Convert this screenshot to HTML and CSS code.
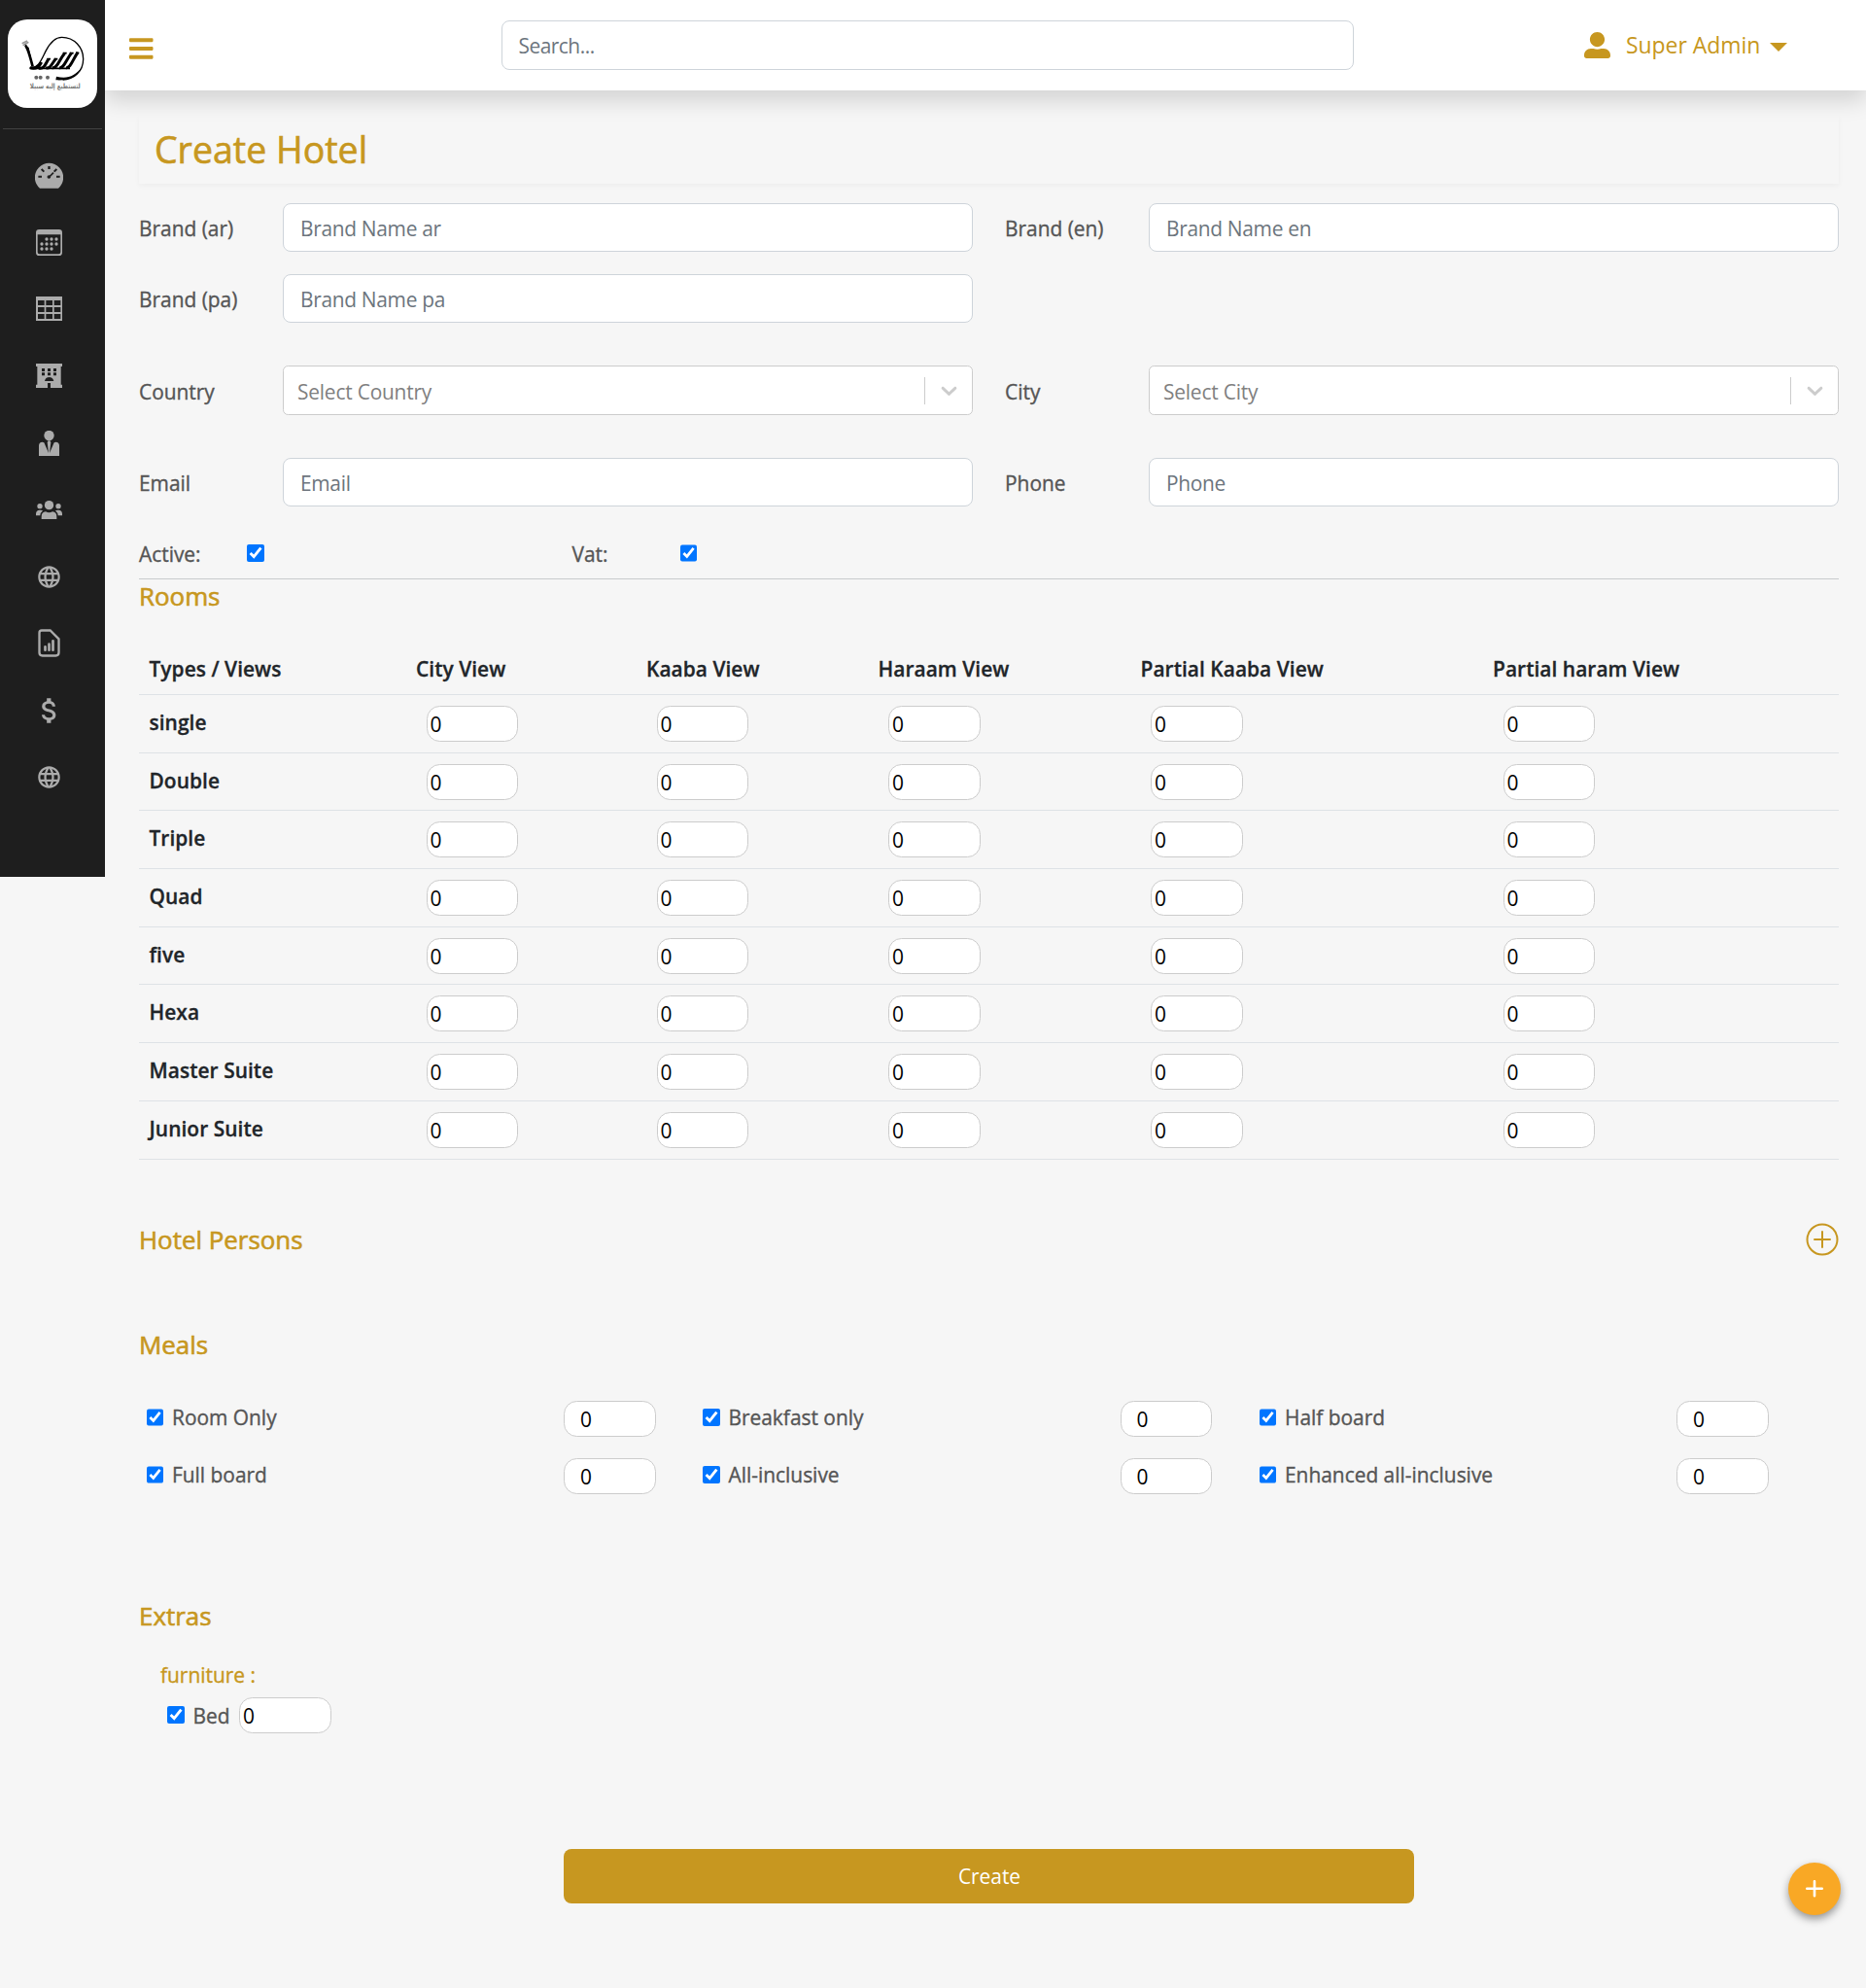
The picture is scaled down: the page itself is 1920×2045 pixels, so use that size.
FILE: index.html
```html
<!DOCTYPE html>
<html lang="en">
<head>
<meta charset="utf-8">
<title>Create Hotel</title>
<link rel="stylesheet" href="styles.css">
</head>
<body>
<svg width="0" height="0" class="defs">
  <symbol id="globe" viewBox="0 0 24 24"><path d="M11.99 2C6.47 2 2 6.48 2 12s4.47 10 9.99 10C17.52 22 22 17.52 22 12S17.52 2 11.99 2zm6.93 6h-2.95c-.32-1.25-.78-2.45-1.38-3.56 1.84.63 3.37 1.91 4.33 3.56zM12 4.04c.83 1.2 1.48 2.53 1.91 3.96h-3.82c.43-1.43 1.08-2.76 1.91-3.96zM4.26 14C4.1 13.36 4 12.69 4 12s.1-1.36.26-2h3.38c-.08.66-.14 1.32-.14 2s.06 1.34.14 2H4.26zm.82 2h2.95c.32 1.25.78 2.45 1.38 3.56-1.84-.63-3.37-1.9-4.33-3.56zm2.95-8H5.08c.96-1.66 2.49-2.93 4.33-3.56C8.81 5.55 8.35 6.75 8.03 8zM12 19.96c-.83-1.2-1.48-2.53-1.91-3.96h3.82c-.43 1.43-1.08 2.76-1.91 3.96zM14.34 14H9.66c-.09-.66-.16-1.32-.16-2s.07-1.35.16-2h4.68c.09.65.16 1.32.16 2s-.07 1.34-.16 2zm.25 5.56c.6-1.11 1.06-2.31 1.38-3.56h2.95c-.96 1.65-2.49 2.93-4.33 3.56zM16.36 14c.08-.66.14-1.32.14-2s-.06-1.34-.14-2h3.38c.16.64.26 1.31.26 2s-.1 1.36-.26 2h-3.38z"/></symbol>
  <symbol id="chevron" viewBox="0 0 20 20"><path d="M4.516 7.548c0.436-0.446 1.043-0.481 1.576 0l3.908 3.747 3.908-3.747c0.533-0.481 1.141-0.446 1.574 0 0.436 0.445 0.408 1.197 0 1.615-0.406 0.418-4.695 4.502-4.695 4.502-0.217 0.223-0.502 0.335-0.787 0.335s-0.57-0.112-0.789-0.335c0 0-4.287-4.084-4.695-4.502s-0.436-1.17 0-1.615z"/></symbol>
</svg>
<div class="app">
  <aside class="sidebar">
    <div class="brand">
      <svg class="logo" viewBox="24 60 276 273" fill="none" stroke="#000">
        <g stroke="#999" stroke-width="5"><path d="M68 134L84 126M71 140L88 130"/></g>
        <path d="M78 140C86 147 92 170 101 206" stroke-width="8"/>
        <path d="M76 136L89 147L96 178Z" fill="#000" stroke="none"/>
        <path d="M92 208C118 214 128 184 141 158C155 130 171 115 191 115C229 115 257 146 257 182C257 220 228 246 194 246" stroke-width="4"/>
        <path d="M252 208C240 235 214 250 172 247L174 236C207 245 232 235 252 208Z" fill="#000" stroke="none"/>
        <path d="M92 209C110 215 122 204 128 192M120 210C134 214 140 200 150 181M141 209C154 214 160 198 172 181M161 209C176 214 182 184 200 164M183 209C197 212 203 186 221 163M204 209C218 211 224 184 240 162" stroke-width="9"/>
        <path d="M94 211H216M146 182H156M168 182H178M194 164H206M215 164H227M234 163H244" stroke-width="5"/>
        <g fill="#666" stroke="none"><circle cx="112" cy="239" r="6"/><circle cx="125" cy="239" r="6"/><circle cx="147" cy="239" r="6"/></g>
        <text class="logo-text" x="170" y="273" text-anchor="middle" textLength="156" lengthAdjust="spacingAndGlyphs">لتستطيع إليه سبيلا</text>
      </svg>
    </div>
    <nav class="menu">
      <a><svg width="29" height="27" viewBox="108 82 87 81"><path fill-rule="evenodd" d="M123 162A44 44 0 1 1 180 162ZM148 94V103H155V94ZM118 123V129H129V123ZM174 123V129H185V123Z"/><path d="M128 103L136 111M175 103L167 111" stroke="#1e1e1e" stroke-width="6"/><path d="M152 127L165 114" stroke="#1e1e1e" stroke-width="5"/><circle cx="151" cy="127" r="5.5" fill="#1e1e1e"/></svg></a>
      <a><svg width="27" height="27" viewBox="111 288 81 81"><path fill-rule="evenodd" d="M121 288H182Q192 288 192 298V359Q192 369 182 369H121Q111 369 111 359V298Q111 288 121 288ZM116 304V358Q116 364 122 364H181Q187 364 187 358V304Z"/><g><circle cx="144" cy="318" r="5"/><circle cx="159" cy="318" r="5"/><circle cx="174" cy="318" r="5"/><circle cx="129" cy="333" r="5"/><circle cx="144" cy="333" r="5"/><circle cx="159" cy="333" r="5"/><circle cx="174" cy="333" r="5"/><circle cx="129" cy="348" r="5"/><circle cx="144" cy="348" r="5"/><circle cx="159" cy="348" r="5"/></g></svg></a>
      <a><svg width="27" height="25" viewBox="111 498 81 75"><path fill-rule="evenodd" d="M111 498H192V573H111ZM117 510V525H137V510ZM142 510V525H162V510ZM167 510V525H187V510ZM117 531V546H137V531ZM142 531V546H162V531ZM167 531V546H187V531ZM117 552V567H137V552ZM142 552V567H162V552ZM167 552V567H187V552Z"/></svg></a>
      <a><svg width="27" height="25" viewBox="111 702 81 75"><path fill-rule="evenodd" d="M111 702H192V711H188V767H192V777H156V762H147V777H111V767H115V711H111ZM129 717V726H138V717ZM147 717V726H156V717ZM165 717V726H174V717ZM129 730V739H138V730ZM147 730V739H156V730ZM165 730V739H174V730ZM138 756H166Q163 744 152 744Q140 744 138 756Z"/></svg></a>
      <a><svg width="21" height="26" viewBox="120 906 63 78"><circle cx="151.500" cy="921" r="15.500"/><path d="M120 984V952Q120 942 131 941L136 943L150 975L146 942L149 937H154L157 942L153 975L167 943L172 941Q183 942 183 952V984Z"/></svg></a>
      <a><svg width="27" height="19.500" viewBox="111 44 81 58.500"><circle cx="151.500" cy="58" r="14"/><circle cx="123" cy="61" r="8"/><circle cx="180" cy="61" r="8"/><path d="M128 102V94Q128 79 141 78Q151.500 84 162 78Q175 79 175 94V102ZM111 90V84Q112 73 122 73H126Q130 73 132 75Q124 82 124 90ZM192 90V84Q191 73 181 73H177Q173 73 171 75Q179 82 179 90Z"/></svg></a>
      <a><svg width="27" height="27"><use href="#globe"/></svg></a>
      <a><svg width="23" height="29" viewBox="117 443 69 87"><path d="M129 447.500H155L181.500 474V516Q181.500 525.500 172 525.500H131Q121.500 525.500 121.500 516V455Q121.500 447.500 129 447.500Z" fill="none" stroke="#ababab" stroke-width="7"/><path d="M139.500 498V508M151.500 490V508M163.500 480V508" stroke="#ababab" stroke-width="8" stroke-linecap="round"/></svg></a>
      <a><svg width="34" height="34" viewBox="0 0 24 24"><path d="M11.8 10.900c-2.270-.590-3-1.200-3-2.150 0-1.090 1.010-1.850 2.700-1.850 1.780 0 2.440.850 2.500 2.100h2.210c-.070-1.720-1.120-3.300-3.210-3.810V3h-3v2.160c-1.940.420-3.500 1.680-3.500 3.610 0 2.310 1.910 3.460 4.700 4.130 2.500.600 3 1.480 3 2.410 0 .690-.490 1.790-2.700 1.790-2.060 0-2.870-.920-2.980-2.100h-2.200c.120 2.190 1.760 3.420 3.680 3.830V21h3v-2.150c1.950-.370 3.500-1.500 3.500-3.550 0-2.840-2.430-3.810-4.700-4.400z"/></svg></a>
      <a><svg width="27" height="27"><use href="#globe"/></svg></a>
    </nav>
  </aside>
  <div class="page">
    <header class="topbar">
      <svg class="burger" viewBox="0 0 448 512"><path d="M16 132h416c8.837 0 16-7.163 16-16V76c0-8.837-7.163-16-16-16H16C7.163 60 0 67.163 0 76v40c0 8.837 7.163 16 16 16zm0 160h416c8.837 0 16-7.163 16-16v-40c0-8.837-7.163-16-16-16H16c-8.837 0-16 7.163-16 16v40c0 8.837 7.163 16 16 16zm0 160h416c8.837 0 16-7.163 16-16v-40c0-8.837-7.163-16-16-16H16c-8.837 0-16 7.163-16 16v40c0 8.837 7.163 16 16 16z"/></svg>
      <input class="control search" placeholder="Search...">
      <div class="profile">
        <svg width="27" height="27" viewBox="0 0 512 512"><path d="M256 288c79.500 0 144-64.500 144-144S335.500 0 256 0 112 64.500 112 144s64.500 144 144 144zm128 32h-55.100c-22.200 10.200-46.900 16-72.900 16s-50.600-5.800-72.900-16H128C57.300 320 0 377.300 0 448v16c0 26.500 21.500 48 48 48h416c26.500 0 48-21.500 48-48v-16c0-70.700-57.300-128-128-128z"/></svg>
        <span class="user">Super Admin</span>
        <i class="caret"></i>
      </div>
    </header>
    <main class="content">
      <h3 class="title">Create Hotel</h3>
      <div class="fields brands">
        <label>Brand (ar)</label><input class="control" placeholder="Brand Name ar">
        <label class="second">Brand (en)</label><input class="control" placeholder="Brand Name en">
        <label>Brand (pa)</label><input class="control" placeholder="Brand Name pa">
      </div>
      <div class="fields place">
        <label>Country</label><div class="select"><span>Select Country</span><i></i><svg width="27" height="27"><use href="#chevron"/></svg></div>
        <label class="second">City</label><div class="select"><span>Select City</span><i></i><svg width="27" height="27"><use href="#chevron"/></svg></div>
      </div>
      <div class="fields contact">
        <label>Email</label><input class="control" placeholder="Email">
        <label class="second">Phone</label><input class="control" placeholder="Phone">
      </div>
      <div class="flags">
        <label>Active:</label><input type="checkbox" checked>
        <label>Vat:</label><input type="checkbox" checked>
      </div>
      <h5 class="heading rooms-heading">Rooms</h5>
      <table class="rooms">
        <colgroup><col class="c1"><col class="c2"><col class="c3"><col class="c4"><col class="c5"><col></colgroup>
        <thead><tr><th>Types / Views</th><th>City View</th><th>Kaaba View</th><th>Haraam View</th><th>Partial Kaaba View</th><th>Partial haram View</th></tr></thead>
        <tbody>
          <tr><th>single</th><td><input class="num" value="0"></td><td><input class="num" value="0"></td><td><input class="num" value="0"></td><td><input class="num" value="0"></td><td><input class="num" value="0"></td></tr>
          <tr><th>Double</th><td><input class="num" value="0"></td><td><input class="num" value="0"></td><td><input class="num" value="0"></td><td><input class="num" value="0"></td><td><input class="num" value="0"></td></tr>
          <tr><th>Triple</th><td><input class="num" value="0"></td><td><input class="num" value="0"></td><td><input class="num" value="0"></td><td><input class="num" value="0"></td><td><input class="num" value="0"></td></tr>
          <tr><th>Quad</th><td><input class="num" value="0"></td><td><input class="num" value="0"></td><td><input class="num" value="0"></td><td><input class="num" value="0"></td><td><input class="num" value="0"></td></tr>
          <tr><th>five</th><td><input class="num" value="0"></td><td><input class="num" value="0"></td><td><input class="num" value="0"></td><td><input class="num" value="0"></td><td><input class="num" value="0"></td></tr>
          <tr><th>Hexa</th><td><input class="num" value="0"></td><td><input class="num" value="0"></td><td><input class="num" value="0"></td><td><input class="num" value="0"></td><td><input class="num" value="0"></td></tr>
          <tr><th>Master Suite</th><td><input class="num" value="0"></td><td><input class="num" value="0"></td><td><input class="num" value="0"></td><td><input class="num" value="0"></td><td><input class="num" value="0"></td></tr>
          <tr><th>Junior Suite</th><td><input class="num" value="0"></td><td><input class="num" value="0"></td><td><input class="num" value="0"></td><td><input class="num" value="0"></td><td><input class="num" value="0"></td></tr>
        </tbody>
      </table>
      <div class="persons">
        <h5 class="heading">Hotel Persons</h5>
        <svg width="34" height="34" viewBox="0 0 34 34" fill="none" stroke="#c79720" stroke-width="2"><circle cx="17" cy="17" r="15.500"/><path d="M17 9V25M9 17H25" stroke-linecap="round"/></svg>
      </div>
      <h5 class="heading meals-heading">Meals</h5>
      <div class="meals">
        <div class="meal"><input type="checkbox" checked><label>Room Only</label><input class="num" value="0"></div>
        <div class="meal"><input type="checkbox" checked><label>Breakfast only</label><input class="num" value="0"></div>
        <div class="meal"><input type="checkbox" checked><label>Half board</label><input class="num" value="0"></div>
        <div class="meal"><input type="checkbox" checked><label>Full board</label><input class="num" value="0"></div>
        <div class="meal"><input type="checkbox" checked><label>All-inclusive</label><input class="num" value="0"></div>
        <div class="meal"><input type="checkbox" checked><label>Enhanced all-inclusive</label><input class="num" value="0"></div>
      </div>
      <h5 class="heading extras-heading">Extras</h5>
      <div class="extras">
        <div class="kind">furniture :</div>
        <div class="extra"><input type="checkbox" checked><label>Bed</label><input class="num" value="0"></div>
      </div>
      <button class="create">Create</button>
    </main>
  </div>
</div>
<button class="fab"><svg width="18" height="18" viewBox="0 0 18 18"><path d="M9 1.200V16.200M1.200 8.700H16.800" stroke="#fff" stroke-width="2.600" stroke-linecap="round"/></svg></button>
</body>
</html>
```
FILE: styles.css
```css
* { box-sizing: border-box; }

body {
  margin: 0;
  background: #f6f6f6;
  color: #555;
  font: 20.9px/32px "Open Sans", "Noto Sans", sans-serif;
}

input, button { font: inherit; letter-spacing: inherit; margin: 0; }

/* Medium weight: the regular face with a slight outline */
label, .kind { -webkit-text-stroke: .35px currentColor; }
.title, .heading { -webkit-text-stroke: .6px currentColor; }

.defs { display: block; position: absolute; }
.app { display: flex; align-items: flex-start; min-height: 2045px; }

/* Sidebar */
.sidebar {
  position: relative;
  z-index: 2;
  flex: none;
  width: 108px;
  height: 902px;
  background: #1e1e1e;
}
.brand { height: 133px; margin: 0 3px; padding: 20px 5px 0; border-bottom: 1px solid #424242; }
.logo { display: block; width: 92px; height: 91px; border-radius: 20px; background: #fff; }
.logo-text { font: bold 22px "DejaVu Sans", sans-serif; fill: #777; stroke: none; direction: rtl; }
.menu { padding-top: 13px; width: 101px; fill: #ababab; }
.menu a { display: flex; align-items: center; justify-content: center; height: 68.8px; }

/* Top bar */
.page { flex: 1; }
.topbar {
  display: flex;
  align-items: center;
  height: 93px;
  padding: 0 81px 0 25px;
  background: #fff;
  box-shadow: 0 10.8px 21.6px rgba(0, 0, 0, .15);
}
.burger { width: 24.5px; height: 28px; margin-top: 7px; fill: #c79720; }
.control {
  width: 100%;
  height: 50px;
  padding: 1px 17px 0;
  border: 1px solid #ced4da;
  border-radius: 8px;
  background: #fff;
  color: #212529;
  outline: 0;
}
.control::placeholder { color: #6c757d; opacity: 1; letter-spacing: -.3px; }
.search { width: 877px; height: 51px; margin-left: 358px; }
.search::placeholder { letter-spacing: -.5px; }
.profile { display: flex; align-items: center; margin-left: auto; color: #c79720; fill: #c79720; }
.user { width: 139px; margin: 0 9px 0 16px; font-size: 22.9px; white-space: nowrap; }
.caret { border: 9px solid transparent; border-top-color: #c79720; border-bottom: 0; margin-top: 4px; }

/* Form */
.content { padding: 25px 28px 0 35px; }
.title {
  margin: 0;
  height: 71px;
  padding-left: 16px;
  color: #c79720;
  font-size: 37.5px;
  line-height: 71px;
  font-weight: 400;
  box-shadow: 0 2.7px 5.4px rgba(0, 0, 0, .04);
}
.fields {
  display: grid;
  grid-template-columns: 148px 710px 181px 710px;
  align-items: center;
}
.fields label { padding-top: 2px; }
.fields .second { padding-left: 33px; }
.brands { margin-top: 20px; row-gap: 23px; }
.place { margin-top: 44px; }
.contact { margin-top: 44px; }
.select {
  display: flex;
  align-items: center;
  height: 51px;
  padding: 0 10px 0 14px;
  border: 1px solid #ccc;
  border-radius: 5.4px;
  background: #fff;
  color: #808080;
  fill: #ccc;
}
.select span { flex: 1; padding-top: 2px; letter-spacing: -.2px; }
.select i { width: 1px; height: 28px; margin-right: 11px; background: #ccc; }
input[type="checkbox"] { flex: none; width: 17.5px; height: 17.5px; accent-color: #0075ff; }
.flags {
  display: grid;
  grid-template-columns: 111px 334.5px 111px 1fr;
  align-items: center;
  height: 75px;
  padding-top: 22px;
  border-bottom: 1px solid #c8cbcd;
}
.flags label { padding-top: 2px; }
.heading {
  margin: 0;
  color: #c79720;
  font-size: 25.9px;
  line-height: 32px;
  font-weight: 400;
}
.rooms-heading { padding-top: 1px; }

/* Rooms */
.rooms {
  width: 1749px;
  margin-top: 32px;
  border-spacing: 0;
  table-layout: fixed;
  color: #212529;
}
.c1 { width: 274.5px; }
.c2 { width: 237px; }
.c3 { width: 238.5px; }
.c4 { width: 270px; }
.c5 { width: 362.5px; }
.rooms th, .rooms td { padding: 11px 10.5px; text-align: left; vertical-align: top; border-bottom: 1px solid #dee2e6; }
.rooms th { font-weight: 600; letter-spacing: .05px; -webkit-text-stroke: .3px currentColor; }
.rooms thead th { height: 54px; padding-top: 11px; padding-bottom: 0; }
.rooms tbody th, .rooms tbody td { height: 59.7px; padding-bottom: 0; }
.rooms tbody th { padding-top: 12px; }
.rooms td .num { margin-left: 10.5px; }
.num {
  display: block;
  width: 94.5px;
  height: 37px;
  padding: 1px 3px 0;
  border: 1px solid #ccc;
  border-radius: 13.5px;
  background: #fff;
  color: #000;
}

/* Lower sections */
.persons { display: flex; justify-content: space-between; align-items: center; width: 1749px; height: 34px; margin-top: 65px; }
.meals-heading { margin-top: 75px; }
.meals { display: grid; grid-template-columns: 572.5px 572.5px 572.5px; row-gap: 22px; margin-top: 42px; }
.meal { display: grid; grid-template-columns: 26.5px 403px 94.5px; align-items: center; padding-left: 7.5px; }
.meal label, .meal input[type="checkbox"] { position: relative; top: -1px; }
.meal .num { padding-left: 16px; }
.extras-heading { margin-top: 109px; }
.extras { margin-top: 29px; padding-left: 22px; }
.extra { display: flex; align-items: center; margin-top: 7px; padding-left: 7px; gap: 9px; }
.extra label { width: 38.5px; padding-top: 1px; }
.kind { color: #c79720; }
.create {
  display: block;
  width: 875px;
  height: 56px;
  margin: 119px auto 0 437px;
  padding: 1px 0 0 1px;
  border: 0;
  border-radius: 8px;
  background: #c79720;
  color: #fff;
}
.fab {
  position: absolute;
  top: 1916px;
  left: 1840px;
  display: flex;
  align-items: center;
  justify-content: center;
  width: 54px;
  height: 54px;
  padding: 0;
  border: 0;
  border-radius: 50%;
  background: #f9a825;
  box-shadow: 0 4px 8px rgba(0, 0, 0, .4);
}
```
